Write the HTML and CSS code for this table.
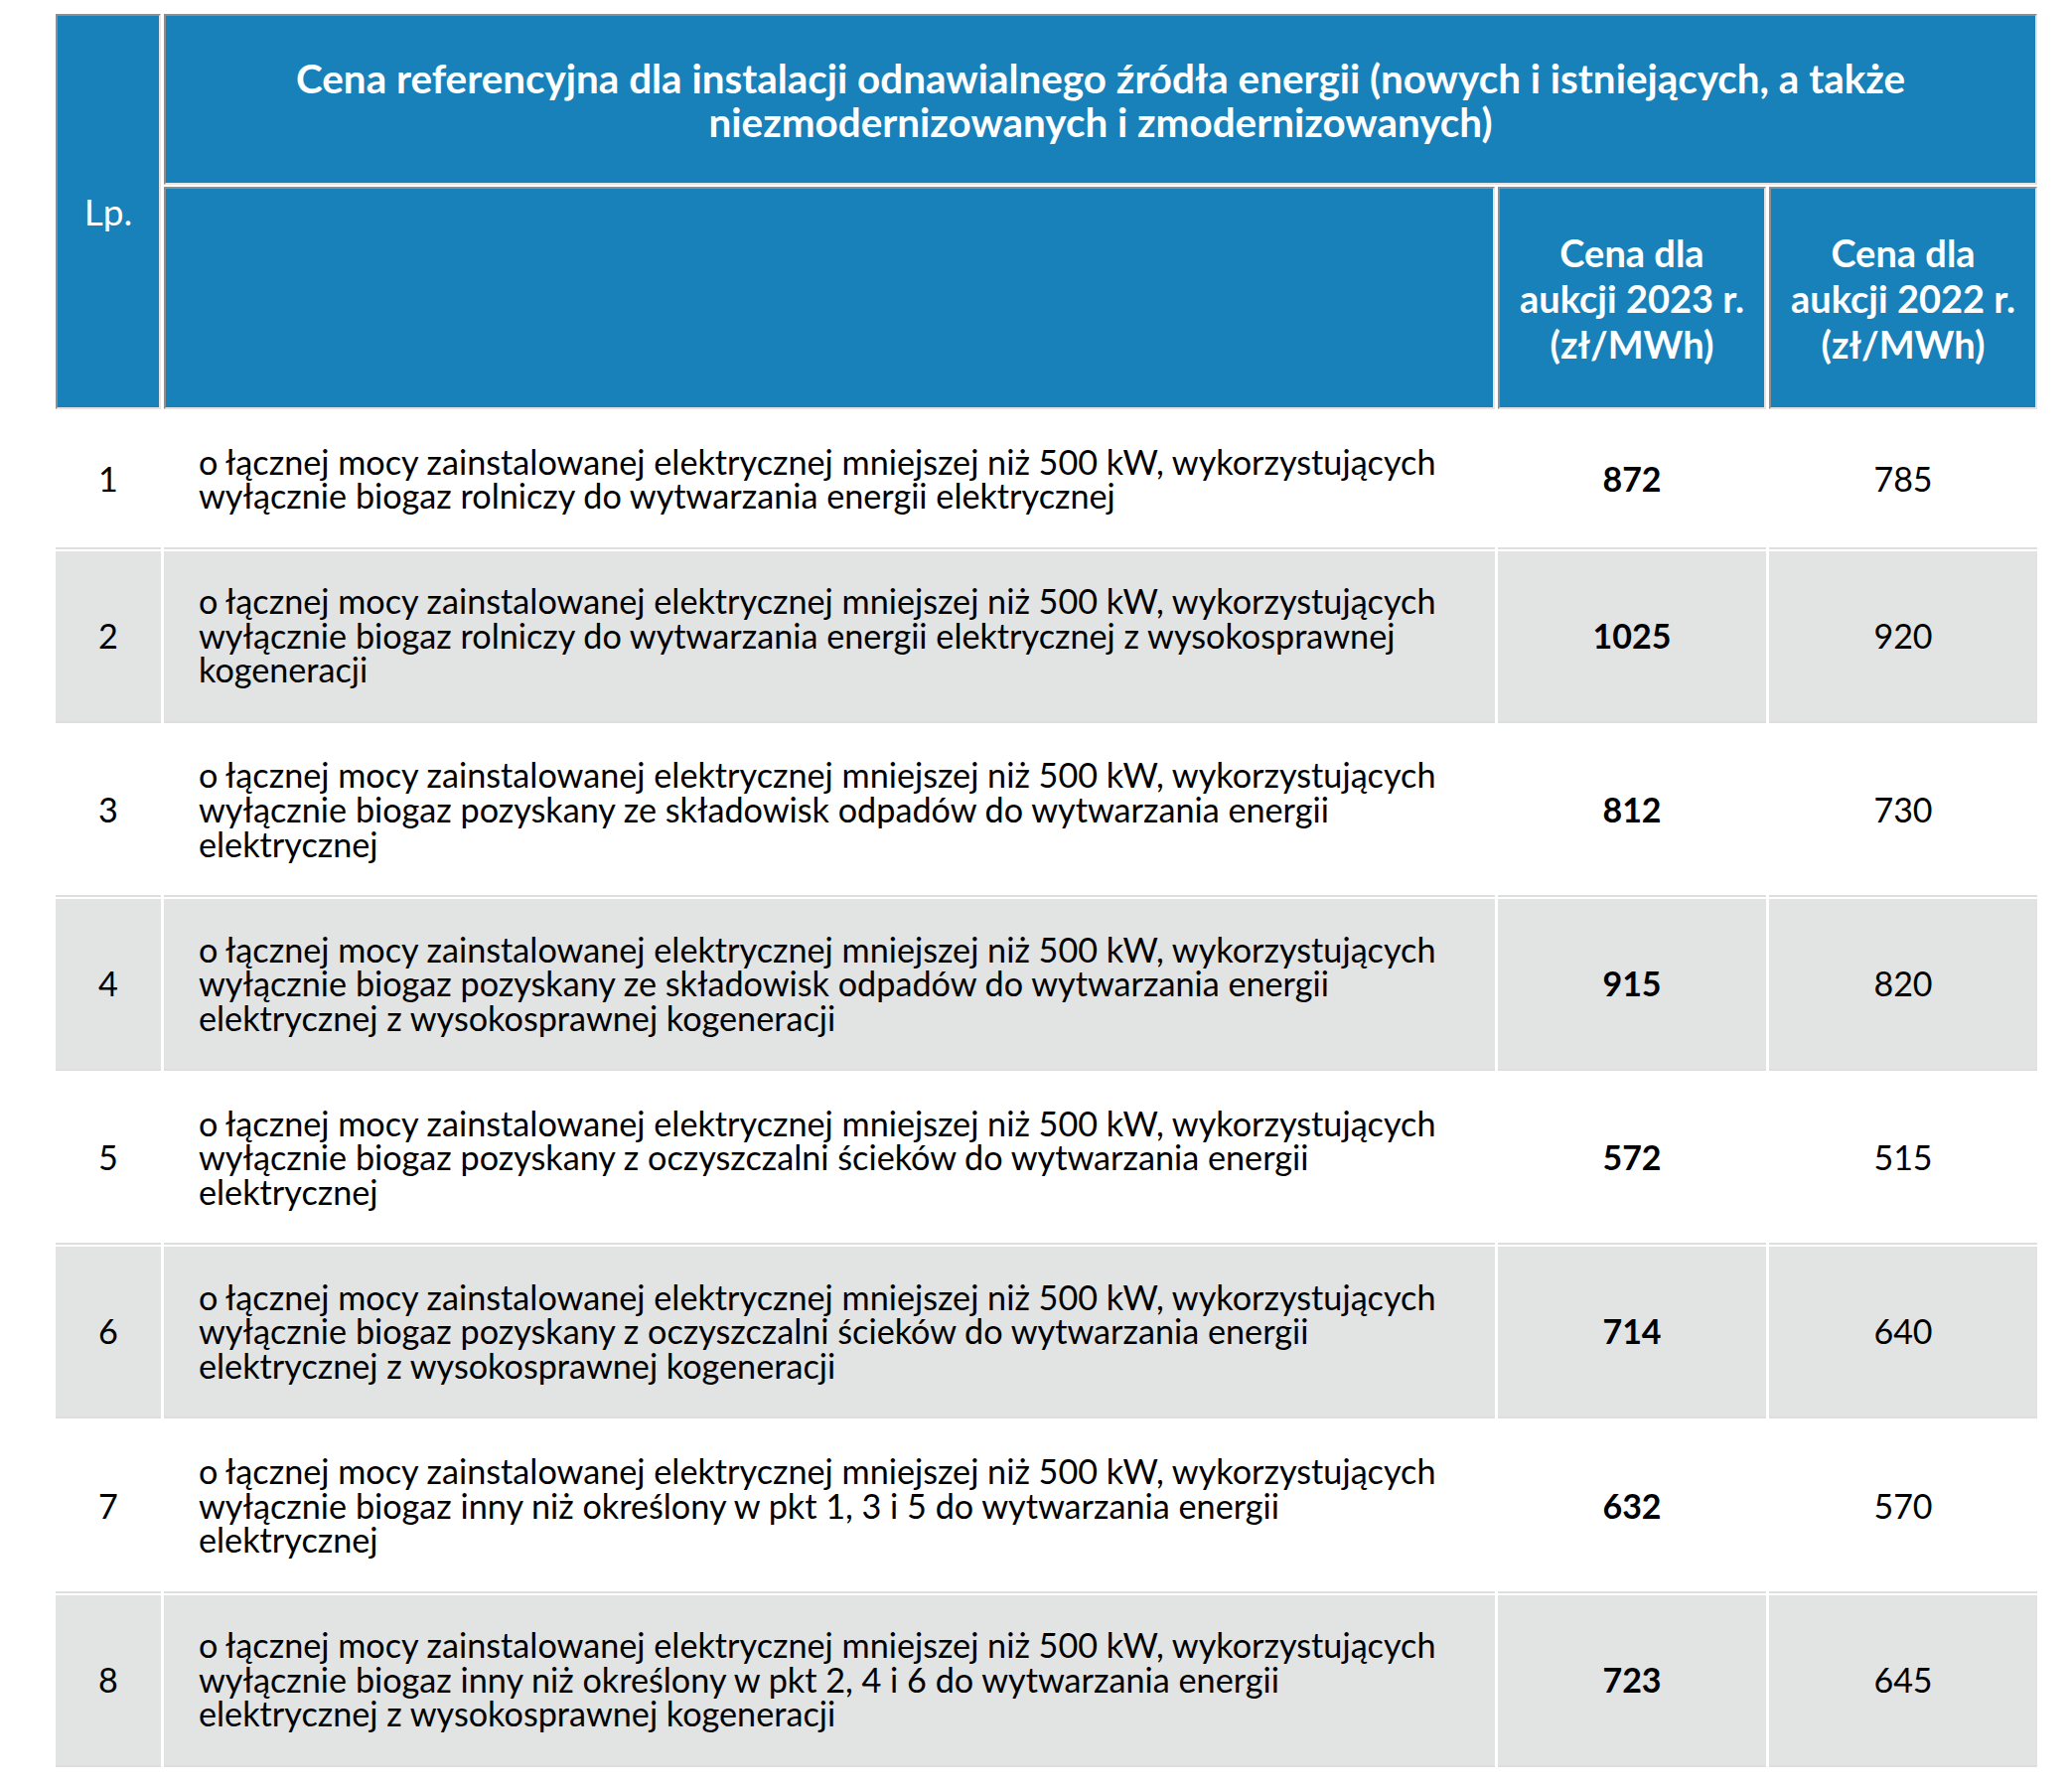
FILE: index.html
```html
<!DOCTYPE html>
<html lang="pl">
<head>
<meta charset="utf-8">
<title>Cena referencyjna</title>
<link rel="stylesheet" href="styles.css">
</head>
<body>
<div class="wrap">
<table class="prices">
  <colgroup>
    <col class="c-lp">
    <col class="c-desc">
    <col class="c-num">
    <col class="c-num">
  </colgroup>
  <thead>
    <tr>
      <th rowspan="2" class="lp-head">Lp.</th>
      <th colspan="3" class="title">Cena referencyjna dla instalacji odnawialnego źródła energii (nowych i istniejących, a także niezmodernizowanych i zmodernizowanych)</th>
    </tr>
    <tr>
      <th></th>
      <th class="sub">Cena dla aukcji 2023 r. (zł/MWh)</th>
      <th class="sub">Cena dla aukcji 2022 r. (zł/MWh)</th>
    </tr>
  </thead>
  <tbody>
    <tr>
      <td class="lp">1</td>
      <td class="desc">o łącznej mocy zainstalowanej elektrycznej mniejszej niż 500 kW, wykorzystujących wyłącznie biogaz rolniczy do wytwarzania energii elektrycznej</td>
      <td class="num new">872</td>
      <td class="num">785</td>
    </tr>
    <tr>
      <td class="lp">2</td>
      <td class="desc">o łącznej mocy zainstalowanej elektrycznej mniejszej niż 500 kW, wykorzystujących wyłącznie biogaz rolniczy do wytwarzania energii elektrycznej z wysokosprawnej kogeneracji</td>
      <td class="num new">1025</td>
      <td class="num">920</td>
    </tr>
    <tr>
      <td class="lp">3</td>
      <td class="desc">o łącznej mocy zainstalowanej elektrycznej mniejszej niż 500 kW, wykorzystujących wyłącznie biogaz pozyskany ze składowisk odpadów do wytwarzania energii elektrycznej</td>
      <td class="num new">812</td>
      <td class="num">730</td>
    </tr>
    <tr>
      <td class="lp">4</td>
      <td class="desc">o łącznej mocy zainstalowanej elektrycznej mniejszej niż 500 kW, wykorzystujących wyłącznie biogaz pozyskany ze składowisk odpadów do wytwarzania energii elektrycznej z wysokosprawnej kogeneracji</td>
      <td class="num new">915</td>
      <td class="num">820</td>
    </tr>
    <tr>
      <td class="lp">5</td>
      <td class="desc">o łącznej mocy zainstalowanej elektrycznej mniejszej niż 500 kW, wykorzystujących wyłącznie biogaz pozyskany z oczyszczalni ścieków do wytwarzania energii elektrycznej</td>
      <td class="num new">572</td>
      <td class="num">515</td>
    </tr>
    <tr>
      <td class="lp">6</td>
      <td class="desc">o łącznej mocy zainstalowanej elektrycznej mniejszej niż 500 kW, wykorzystujących wyłącznie biogaz pozyskany z oczyszczalni ścieków do wytwarzania energii elektrycznej z wysokosprawnej kogeneracji</td>
      <td class="num new">714</td>
      <td class="num">640</td>
    </tr>
    <tr>
      <td class="lp">7</td>
      <td class="desc">o łącznej mocy zainstalowanej elektrycznej mniejszej niż 500 kW, wykorzystujących wyłącznie biogaz inny niż określony w pkt 1, 3 i 5 do wytwarzania energii elektrycznej</td>
      <td class="num new">632</td>
      <td class="num">570</td>
    </tr>
    <tr>
      <td class="lp">8</td>
      <td class="desc">o łącznej mocy zainstalowanej elektrycznej mniejszej niż 500 kW, wykorzystujących wyłącznie biogaz inny niż określony w pkt 2, 4 i 6 do wytwarzania energii elektrycznej z wysokosprawnej kogeneracji</td>
      <td class="num new">723</td>
      <td class="num">645</td>
    </tr>
  </tbody>
</table>
</div>
</body>
</html>
```

FILE: styles.css
```css
html, body {
  margin: 0;
  padding: 0;
  background: #ffffff;
}

body {
  font-family: Lato, "Noto Sans", sans-serif;
  color: #000000;
}

.wrap {
  padding: 12px 0 20px 53px;
}

.prices {
  border-collapse: separate;
  border-spacing: 3px 2px;
  table-layout: fixed;
  width: 2001px;
}

.c-lp { width: 106px; }
.c-desc { width: 1340px; }
.c-num { width: 270px; }

.prices th {
  background: #1881b9;
  color: #ffffff;
  font-weight: 700;
  font-size: 38px;
  line-height: 46px;
  text-align: center;
  vertical-align: middle;
  padding: 41px 12px 41px;
  border-style: solid;
  border-width: 2px;
  border-color: #8e8e8e #e4e4e4 #e4e4e4 #8e8e8e;
}

.prices th.title {
  font-size: 40.4px;
  line-height: 44px;
  padding-top: 41px;
  padding-bottom: 39px;
}

.prices th.lp-head {
  font-weight: 400;
  font-size: 37px;
}

.prices td {
  font-size: 34.2px;
  line-height: 34.6px;
  padding: 33.7px 45px 33.7px 35px;
  vertical-align: middle;
  border-bottom: 2px solid #dedede;
}

.prices tbody tr:nth-child(even) td {
  background: #e2e3e3;
}

.prices td.lp,
.prices td.num {
  text-align: center;
  padding-left: 8px;
  padding-right: 8px;
}

.prices td.num {
  font-size: 34px;
}

.prices td.new {
  font-weight: 700;
}
```
